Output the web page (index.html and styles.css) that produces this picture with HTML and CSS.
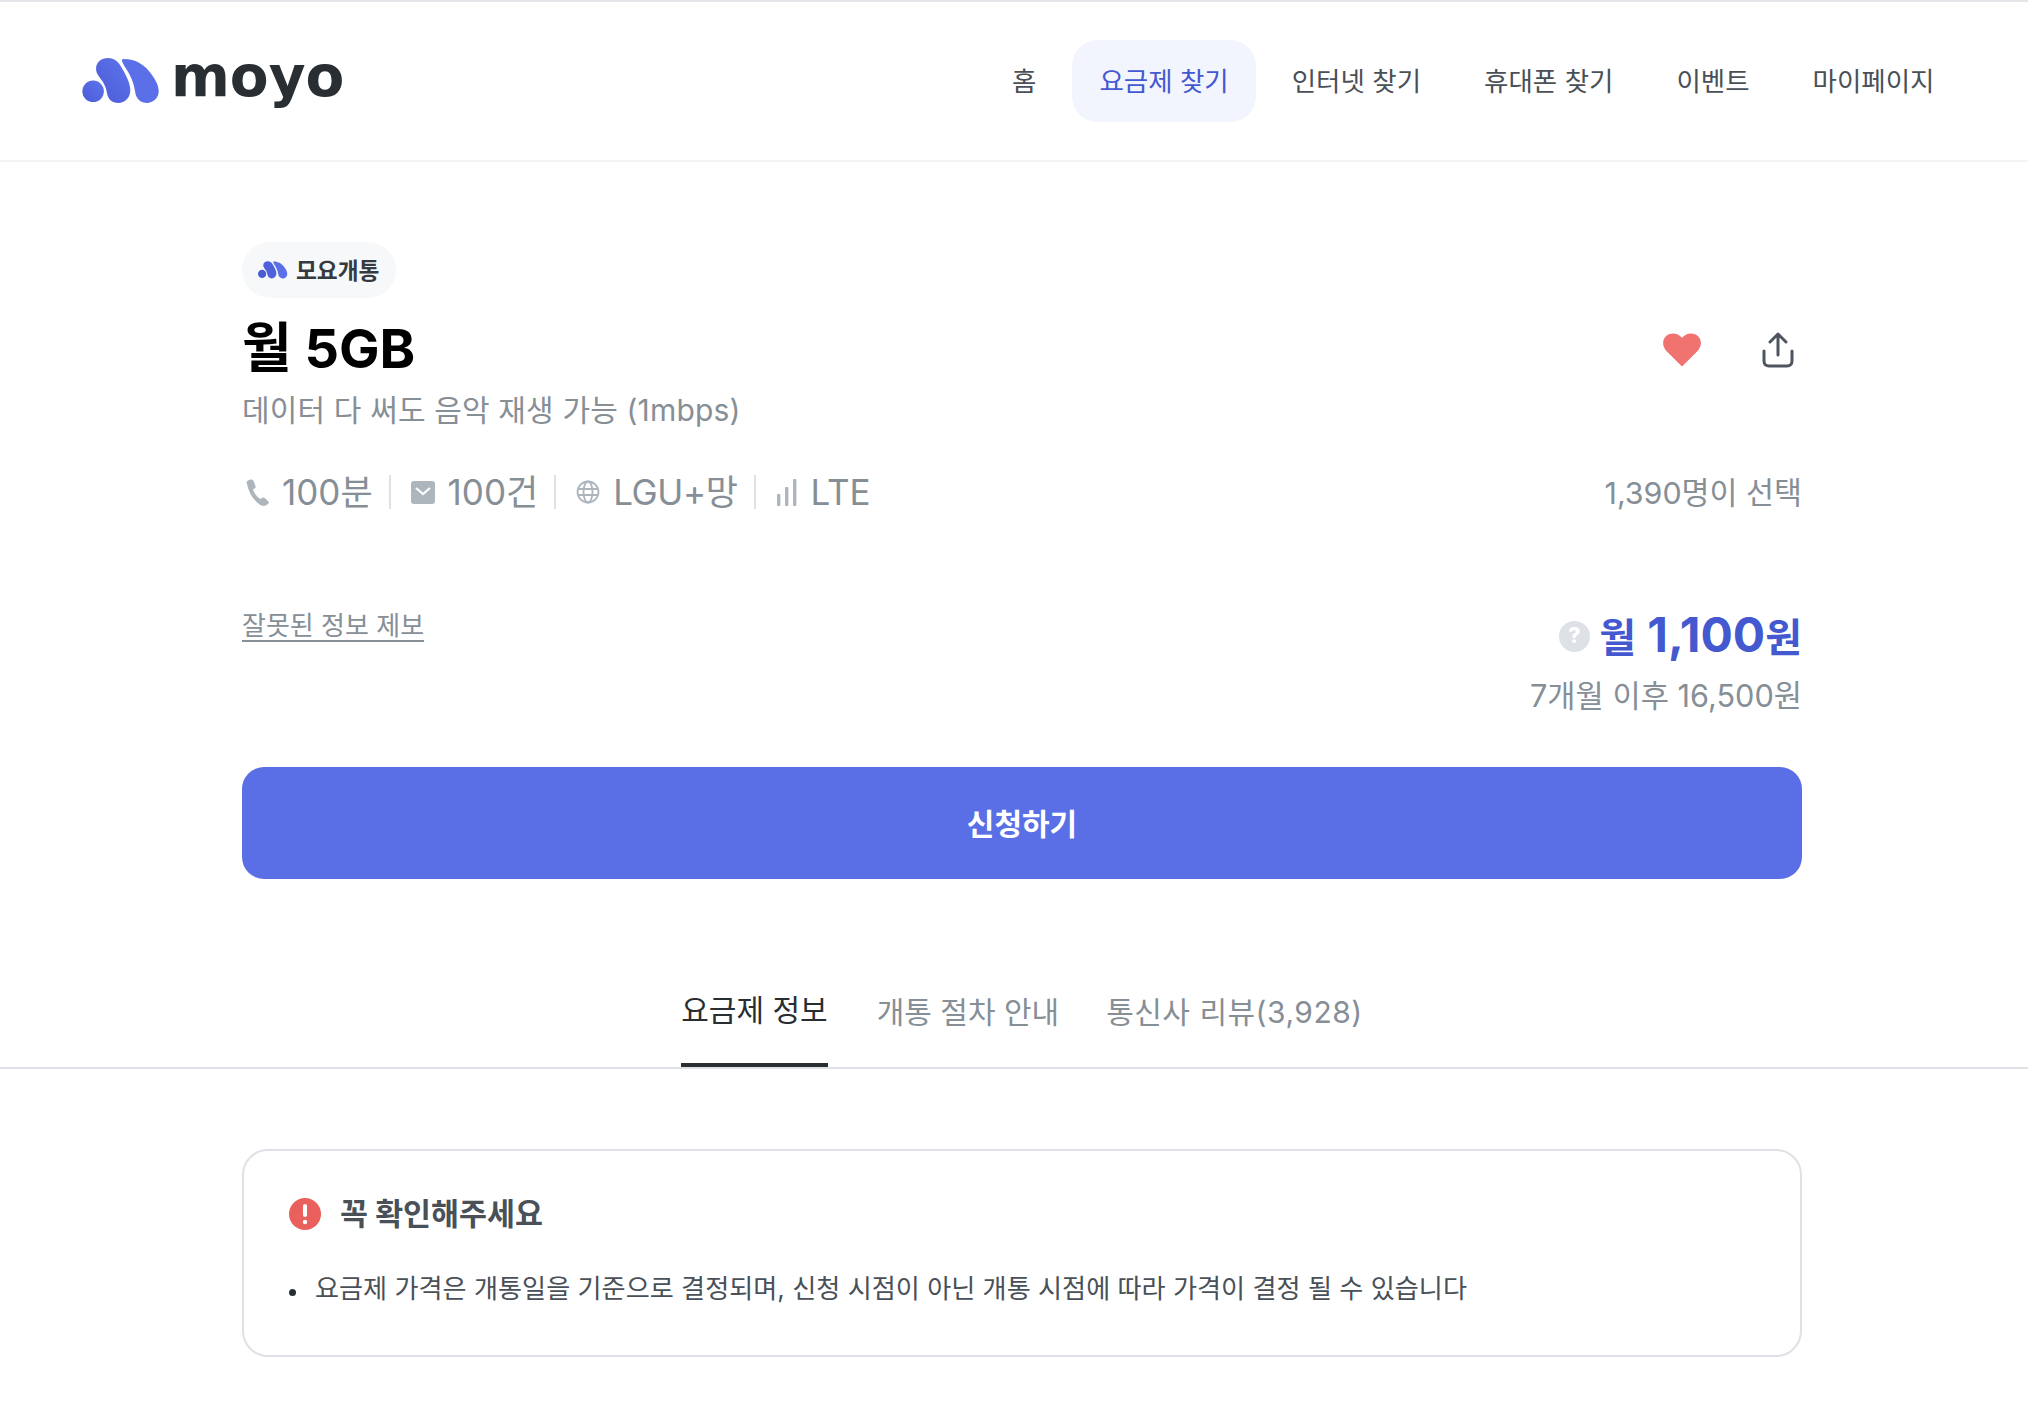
FILE: index.html
```html
<!DOCTYPE html>
<html lang="ko">
<head>
    <meta charset="UTF-8">
    <meta name="viewport" content="width=device-width, initial-scale=1.0">
    <title>모요 - 월 5GB</title>
    <link rel="stylesheet" href="styles.css">
</head>
<body>
    <header class="header">
        <a class="logo" href="#" aria-label="moyo">
            <svg class="logo-mark" viewBox="0 0 80 47" width="79" height="46">
                <defs>
                    <linearGradient id="logoFill" x1="0" y1="1" x2="1" y2="0">
                        <stop offset="0" stop-color="#4a5cd4"/>
                        <stop offset="1" stop-color="#5f74ee"/>
                    </linearGradient>
                </defs>
                <circle cx="11" cy="34" r="11" fill="url(#logoFill)"/>
                <path d="M14 11C14 4 20 0 26 0C32 0 36 3 39 8C45 18 49 26 49 33C49 41 43 46 37 46C30 46 26 42 25 35C24 28 20 23 17 19C15 16 14 14 14 11Z" fill="url(#logoFill)"/>
                <path d="M42 1C55 1 64 7 71 17C76 24 78 29 78 34C78 41 72 46 66 46C60 46 55 42 54 35C53 26 49 17 44 10C41 5 39 1 42 1Z" fill="#5b70e8"/>
            </svg>
            <span class="logo-text">moyo</span>
        </a>
        <nav class="nav">
            <a class="nav-item" href="#">홈</a>
            <a class="nav-item active" href="#">요금제 찾기</a>
            <a class="nav-item" href="#">인터넷 찾기</a>
            <a class="nav-item" href="#">휴대폰 찾기</a>
            <a class="nav-item" href="#">이벤트</a>
            <a class="nav-item" href="#">마이페이지</a>
        </nav>
    </header>

    <main class="plan">
        <div class="badge">
            <svg class="badge-mark" viewBox="0 0 80 47" width="30" height="18">
                <circle cx="11" cy="34" r="11" fill="#4a5cd4"/>
                <path d="M14 11C14 4 20 0 26 0C32 0 36 3 39 8C45 18 49 26 49 33C49 41 43 46 37 46C30 46 26 42 25 35C24 28 20 23 17 19C15 16 14 14 14 11Z" fill="#4f62dc"/>
                <path d="M42 1C55 1 64 7 71 17C76 24 78 29 78 34C78 41 72 46 66 46C60 46 55 42 54 35C53 26 49 17 44 10C41 5 39 1 42 1Z" fill="#5b70e8"/>
            </svg>
            <span class="badge-text">모요개통</span>
        </div>

        <div class="title-row">
            <div>
                <h1 class="title">월 5GB</h1>
                <p class="subtitle">데이터 다 써도 음악 재생 가능 (1mbps)</p>
            </div>
            <div class="actions">
                <svg viewBox="0 0 40 36" width="38" height="34" aria-label="찜">
                    <path d="M20 35.5L4 19.5C-1.5 14 -1 6.5 3.5 2.8C8.5 -1 15.5 -0.2 20 5C24.5 -0.2 31.5 -1 36.5 2.8C41 6.5 41.5 14 36 19.5Z" fill="#f07370"/>
                </svg>
                <svg viewBox="0 0 32 36" width="32" height="36" fill="none" stroke="#4e5560" stroke-width="3" stroke-linecap="round" stroke-linejoin="round" aria-label="공유">
                    <path d="M16 23V2M8 10L16 2L24 10"/>
                    <path d="M2 19V29C2 32 4 34 7 34H25C28 34 30 32 30 29V19"/>
                </svg>
            </div>
        </div>

        <div class="spec-row">
            <ul class="specs">
                <li class="spec">
                    <svg viewBox="0 0 23 27" width="23" height="27"><path d="M1 5C0 3 1 2 3 1L5 0.5C6 0.3 7 1 7.5 2L9.5 7C10 8 9.5 9 8.5 9.5L7 10.5C8 14 11 18 14.5 20L16 19C17 18.3 18 18.5 19 19.2L22 22C23 23 23 24 22 25L20 26.2C18 27.5 16 27 13.5 25.5C7 21 2.5 13 1 5Z" fill="#adb5bd"/></svg>
                    <span>100분</span>
                </li>
                <li class="spec">
                    <svg viewBox="0 0 24 23" width="24" height="23"><rect width="24" height="23" rx="3" fill="#adb5bd"/><path d="M5 7L12 13L19 7" fill="none" stroke="#fff" stroke-width="2.2"/></svg>
                    <span>100건</span>
                </li>
                <li class="spec spec-net">
                    <svg viewBox="0 0 24 24" width="24" height="24" fill="none" stroke="#adb5bd" stroke-width="1.8"><circle cx="12" cy="12" r="10.5"/><ellipse cx="12" cy="12" rx="4.5" ry="10.5"/><path d="M1.5 9H22.5M1.5 15H22.5"/></svg>
                    <span>LGU+망</span>
                </li>
                <li class="spec spec-lte">
                    <svg viewBox="0 0 20 27" width="20" height="27"><rect x="0" y="15" width="3.4" height="12" rx="1" fill="#adb5bd"/><rect x="8" y="8" width="3.4" height="19" rx="1" fill="#adb5bd"/><rect x="16" y="0" width="3.4" height="27" rx="1" fill="#adb5bd"/></svg>
                    <span>LTE</span>
                </li>
            </ul>
            <span class="picked">1,390명이 선택</span>
        </div>

        <div class="price-row">
            <a class="report" href="#">잘못된 정보 제보</a>
            <div class="price">
                <div class="price-main">
                    <svg viewBox="0 0 32 32" width="31" height="31"><circle cx="16" cy="16" r="16" fill="#dee2e6"/><text x="16" y="23" text-anchor="middle" class="price-help">?</text></svg>
                    <strong><span class="price-unit">월</span> 1,100<span class="price-unit">원</span></strong>
                </div>
                <p class="price-after">7개월 이후 16,500원</p>
            </div>
        </div>

        <button class="apply">신청하기</button>
    </main>

    <div class="tabs">
        <a class="tab active" href="#">요금제 정보</a>
        <a class="tab" href="#">개통 절차 안내</a>
        <a class="tab tab-review" href="#">통신사 리뷰(3,928)</a>
    </div>

    <section class="notice">
        <h2 class="notice-title">
            <svg viewBox="0 0 32 32" width="32" height="32"><circle cx="16" cy="16" r="16" fill="#e9605c"/><rect x="14" y="6" width="4" height="13" rx="2" fill="#fff"/><circle cx="16" cy="24" r="2.2" fill="#fff"/></svg>
            <span>꼭 확인해주세요</span>
        </h2>
        <ul class="notice-list">
            <li>요금제 가격은 개통일을 기준으로 결정되며, 신청 시점이 아닌 개통 시점에 따라 가격이 결정 될 수 있습니다</li>
        </ul>
    </section>
</body>
</html>
```

FILE: styles.css
```css
* {
    box-sizing: border-box;
}

body {
    margin: 0;
    background-color: #fff;
    color: #292e33;
    font-family: Inter, "Noto Sans CJK KR", sans-serif;
    border-top: 2px solid #e4e6e9;
}

a {
    color: inherit;
    text-decoration: none;
}

.header {
    display: flex;
    justify-content: space-between;
    align-items: center;
    height: 160px;
    padding: 0 66px 0 82px;
    border-bottom: 2px solid #f1f3f5;
}

.logo {
    display: flex;
    align-items: center;
    gap: 10px;
}

.logo-text {
    font-family: "DejaVu Sans", sans-serif;
    font-size: 56.5px;
    font-weight: 700;
    line-height: 1;
    color: #292e33;
    margin-top: -7px;
}

.nav {
    display: flex;
    gap: 8px;
}

.nav-item {
    padding: 0 27.5px;
    height: 82px;
    line-height: 82px;
    font-size: 26.5px;
    border-radius: 26px;
    color: #495057;
}

.nav-item.active {
    background-color: #f2f5fd;
    color: #4459d0;
}

.plan {
    width: 1560px;
    margin-left: 242px;
    padding-top: 80px;
}

.badge {
    display: inline-flex;
    align-items: center;
    gap: 8px;
    height: 56px;
    padding: 0 16px;
    border-radius: 28px;
    background-color: #f7f8fa;
    font-size: 22.7px;
    font-weight: 700;
    color: #343a40;
}

.badge-text {
    margin-top: -2px;
}

.title-row {
    display: flex;
    justify-content: space-between;
    align-items: flex-start;
    margin-top: 15px;
}

.title {
    margin: 0;
    font-size: 54px;
    line-height: 72px;
    font-weight: 700;
    color: #000;
}

.subtitle {
    margin: 2px 0 0;
    font-size: 30px;
    line-height: 46px;
    letter-spacing: 0.15px;
    color: #868e96;
}

.actions {
    display: flex;
    align-items: center;
    gap: 61px;
    margin-top: 19px;
    margin-right: 8px;
}

.spec-row {
    display: flex;
    justify-content: space-between;
    align-items: center;
    margin-top: 35px;
}

.specs {
    display: flex;
    align-items: center;
    margin: 0;
    padding: 0 0 0 4px;
    list-style: none;
}

.spec {
    display: flex;
    align-items: center;
    gap: 13px;
    font-size: 35px;
    line-height: 48px;
    color: #868e96;
}

.spec + .spec {
    margin-left: 16px;
}

.spec + .spec::before {
    content: "";
    width: 2px;
    height: 34px;
    margin-right: 7px;
    background-color: #dee2e6;
}

.spec-net {
    letter-spacing: -0.4px;
}

.spec-lte {
    gap: 14px;
}

.picked {
    margin-top: -2px;
    font-size: 30.4px;
    color: #868e96;
}

.price-row {
    display: flex;
    justify-content: space-between;
    align-items: flex-start;
    margin-top: 87px;
}

.report {
    margin-top: 3px;
    font-size: 26px;
    line-height: 40px;
    color: #868e96;
    text-decoration: underline;
    text-underline-offset: 5px;
}

.price {
    text-align: right;
}

.price-main {
    display: flex;
    justify-content: flex-end;
    align-items: center;
    gap: 9px;
    font-size: 48px;
    line-height: 64px;
    color: #4459d0;
}

.price-unit {
    font-size: 40px;
}

.price-help {
    font-family: Inter, sans-serif;
    font-size: 22px;
    font-weight: 800;
    fill: #fff;
}

.price-after {
    margin: 3px 0 0;
    font-size: 30.7px;
    line-height: 46px;
    color: #868e96;
}

.apply {
    display: block;
    width: 100%;
    height: 112px;
    margin-top: 48px;
    padding: 0 0 3px;
    border: none;
    border-radius: 22px;
    background-color: #5a6fe6;
    color: #fff;
    font-family: inherit;
    font-size: 30px;
    font-weight: 700;
    cursor: pointer;
}

.tabs {
    display: flex;
    justify-content: center;
    gap: 49px;
    height: 190px;
    padding: 111px 0 0 16px;
    border-bottom: 2px solid #dee2e6;
}

.tab {
    height: 77px;
    font-size: 30px;
    line-height: 44px;
    color: #868e96;
}

.tab.active {
    margin-top: -2px;
    height: 79px;
    color: #292e33;
    border-bottom: 4px solid #292e33;
}

.tab-review {
    margin-left: -2px;
    letter-spacing: 0.5px;
}

.notice {
    width: 1560px;
    margin: 80px 0 0 242px;
    padding: 41px 45px 45px;
    border: 2px solid #dee2e6;
    border-radius: 26px;
}

.notice-title {
    display: flex;
    align-items: center;
    gap: 19px;
    margin: 0;
    font-size: 30.4px;
    line-height: 44px;
    font-weight: 700;
    color: #495057;
}

.notice-list {
    margin: 32px 0 0;
    padding: 0;
    list-style: none;
    font-size: 26.15px;
    line-height: 42px;
    color: #495057;
}

.notice-list li {
    display: flex;
    align-items: center;
    gap: 19px;
}

.notice-list li::before {
    content: "";
    width: 7px;
    height: 7px;
    margin-top: 6px;
    border-radius: 50%;
    background-color: #292e33;
}
```
